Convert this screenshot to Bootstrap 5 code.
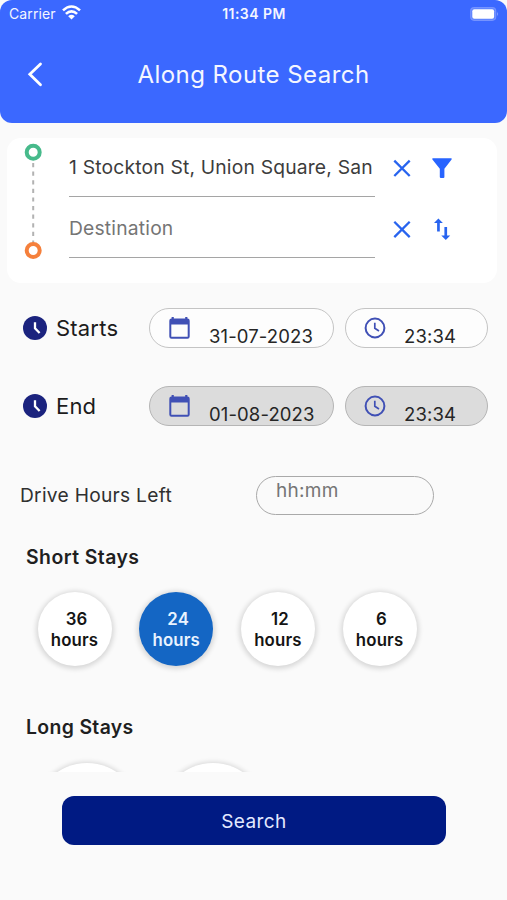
<!DOCTYPE html>
<html lang="en">
<head>
<meta charset="utf-8">
<meta name="viewport" content="width=device-width, initial-scale=1">
<title>Along Route Search</title>
<link href="https://cdn.jsdelivr.net/npm/bootstrap@5.3.0/dist/css/bootstrap.min.css" rel="stylesheet">
<style>
body{font-family:Inter,"Liberation Sans",sans-serif;background:#fafafa;color:#212121;height:900px;overflow:hidden;line-height:1.2}
svg{display:block;flex:none}
.app-head{height:123px;background:#3b68ff;border-radius:12px;color:#f4f6ff}
.status-row{height:28px;padding:0 8px 0 9px}
.status-row>div{flex:1 1 0}
.carrier{font-size:14px;letter-spacing:.1px}
.wifi{margin-left:-2px;margin-top:-2px}
.clock-text{font-size:14px;font-weight:600;letter-spacing:.45px;padding-top:1px}
.title-row{height:94px;padding:0 27px}
.title-row h1{font-size:24px;font-weight:400;letter-spacing:.45px}
.route-card{margin:15px 10px 0 7px;height:145px;background:#fff;border-radius:14px;padding:5px 43px 0 17px}
.route-fields{width:306px;margin-left:27px}
.route-field{height:54px;border-bottom:1.4px solid #a5a5a5;font-size:19.3px;letter-spacing:.18px;color:#3c3c3c;padding-bottom:3px;white-space:nowrap}
.route-field.second{height:61px;color:#757575;padding:3px 0 0}
.route-actions{margin-left:17px;width:60px}
.action-row{height:50px}
.action-row.second{height:72px}
.time-row{height:40px;padding-left:23px;margin-top:25px}
.time-row.ends{margin-top:38px}
.time-label{width:93px;margin-left:9px;padding-top:1px;font-size:22px;letter-spacing:.2px;color:#1c1c1c}
.pill{height:40px;border:1px solid #c4c4c4;border-radius:20px;background:#fdfdfd;font-size:18.5px;letter-spacing:.12px;color:#262626}
.pill span{margin:16px 0 0 17px;line-height:26px;white-space:nowrap}
.pill.filled{background:#dcdcdc;border-color:#b5b5b5}
.pill-date{width:185px;padding-left:18px}
.pill-time{width:143px;padding-left:17px;margin-left:11px}
.drive-row{height:40px;margin-top:49px;padding-left:20px;font-size:19.2px;letter-spacing:.27px;color:#303030}
.hours-box{width:178px;height:39px;border:1.4px solid #a9a9a9;border-radius:20px;padding:3px 0 0 19px;font-size:19px;letter-spacing:.3px;color:#757575}
.drive-label{width:236px;padding-top:2px}
.section-title{font-size:19.4px;font-weight:600;letter-spacing:.45px;padding:1px 0 0 26px;height:24px;line-height:24px;color:#1f1f1f;margin:29px 0 0}
.section-title.long{margin-top:48px;letter-spacing:.35px}
.stays{padding-left:37.5px;gap:27.7px;margin-top:24px}
.stay{width:74px;height:74px;border-radius:50%;background:#fff;box-shadow:0 1px 5px 2px rgba(0,0,0,.14);color:#141414;font-size:16.8px;font-weight:600;line-height:21px;letter-spacing:.15px;padding-top:2px}
.stay .num{padding-left:4px}
.stay.on{background:#1466c4;color:#e9f3ff}
.long-stays{height:20px;overflow:hidden;padding:11px 0 0 34px;gap:20px;margin-top:14px}
.stay-lg{width:106px;height:106px}
.search-btn,.search-btn:hover{display:block;width:384px;height:49px;margin:24px 0 0 62px;border:0;border-radius:12px;background:#001a83;color:#e3e9ff;font-size:19px;letter-spacing:.4px;padding:3px 0 0}
</style>
</head>
<body>
<header class="app-head">
  <div class="status-row d-flex align-items-center">
    <div class="d-flex align-items-center gap-2"><span class="carrier">Carrier</span>
      <svg class="wifi" width="19" height="15" viewBox="0 0 19 15"><g fill="none" stroke="#fff" stroke-width="2.600"><path d="M1 5.400Q9.500-2.400 18 5.400"/><path d="M3.900 8.900Q9.500 3.700 15.100 8.900"/></g><path d="M6.200 11.200Q9.500 8.300 12.800 11.200L9.500 14.500Z" fill="#fff"/></svg>
    </div>
    <div class="text-center clock-text">11:34 PM</div>
    <div class="d-flex justify-content-end">
      <svg width="29" height="14" viewBox="0 0 29 14"><rect x=".7" y=".7" width="25" height="12.600" rx="3.500" fill="#5c82ff" stroke="#7593ff" stroke-width="1.200"/><rect x="2.300" y="2.300" width="21.800" height="9.400" rx="2" fill="#fff"/><path d="M27.200 4.800Q29 7 27.200 9.200Z" fill="#91aaff"/></svg>
    </div>
  </div>
  <div class="title-row d-flex align-items-center justify-content-between">
    <svg width="16" height="26" viewBox="0 0 16 26"><path d="M13.500 2 2.800 12.300 13.500 22.700" fill="none" stroke="#fff" stroke-width="2.800" stroke-linecap="round"/></svg>
    <h1 class="m-0">Along Route Search</h1>
    <span class="px-2"></span>
  </div>
</header>

<main>
  <section class="route-card d-flex">
    <svg width="18" height="118" viewBox="0 0 18 118"><path d="M9.200 20V102" stroke="#b2b2b2" stroke-width="2" stroke-dasharray="4.200 4.400"/><circle cx="9.200" cy="9.300" r="6.500" fill="#fff" stroke="#47ba8b" stroke-width="4"/><circle cx="9.200" cy="107.500" r="6.500" fill="#fff" stroke="#f5803c" stroke-width="4"/></svg>
    <div class="route-fields">
      <div class="route-field d-flex align-items-center">1 Stockton St, Union Square, San</div>
      <div class="route-field second d-flex align-items-center">Destination</div>
    </div>
    <div class="route-actions">
      <div class="action-row d-flex align-items-center justify-content-between">
        <svg width="20" height="20" viewBox="0 0 20 20"><path d="M2.300 2.600 17.700 18M17.700 2.600 2.300 18" stroke="#2864ef" stroke-width="2.300"/></svg>
        <svg width="20" height="20" viewBox="0 0 20 20"><path d="M.8.300H19.200Q20.200.8 19.400 1.800L12.400 10.700V19Q12.400 20 11.400 20H8.900Q7.800 20 7.800 19V10.700L.6 1.800Q-.2.8.8.300Z" fill="#2864ff"/></svg>
      </div>
      <div class="action-row second d-flex align-items-center justify-content-between">
        <svg width="20" height="20" viewBox="0 0 20 20"><path d="M2.300 2.700 17.700 18.100M17.700 2.700 2.300 18.100" stroke="#2864ef" stroke-width="2.300"/></svg>
        <svg width="20" height="22" viewBox="0 0 20 22"><g transform="translate(.6 .4)"><path d="M5.800 0 10.300 4.600H7.200V13.200H4.500V4.600H1.400Z" fill="#2864ef"/><path d="M13.200 21.600 8.700 17H11.800V8.500H14.500V17H17.600Z" fill="#2864ef"/></g></svg>
      </div>
    </div>
  </section>

  <section class="time-row d-flex align-items-center">
    <svg width="24" height="24" viewBox="0 0 24 24"><circle cx="12" cy="12" r="12" fill="#1b237e"/><path d="M12 6.300V12.300L16.600 17" fill="none" stroke="#fff" stroke-width="2.300"/></svg>
    <span class="time-label">Starts</span>
    <div class="pill pill-date d-flex align-items-center">
      <svg width="24" height="24" viewBox="0 0 24 24"><path d="M4.700 1V5M18.300 1V5" stroke="#4050b5" stroke-width="2.200"/><path d="M3.500 2.500H19.500Q21.700 2.500 21.700 4.700V20.500Q21.700 22.700 19.500 22.700H3.500Q1.300 22.700 1.300 20.500V4.700Q1.300 2.500 3.500 2.500ZM3.300 8.500V20.700H19.700V8.500Z" fill="#4050b5" fill-rule="evenodd"/></svg>
      <span>31-07-2023</span>
    </div>
    <div class="pill pill-time d-flex align-items-center">
      <svg width="24" height="24" viewBox="0 0 24 24"><circle cx="12" cy="12" r="9.400" fill="none" stroke="#4050b5" stroke-width="2"/><path d="M11.800 6.800V12.300L16 15" fill="none" stroke="#4050b5" stroke-width="1.700"/></svg>
      <span>23:34</span>
    </div>
  </section>

  <section class="time-row ends d-flex align-items-center">
    <svg width="24" height="24" viewBox="0 0 24 24"><circle cx="12" cy="12" r="12" fill="#1b237e"/><path d="M12 6.300V12.300L16.600 17" fill="none" stroke="#fff" stroke-width="2.300"/></svg>
    <span class="time-label">End</span>
    <div class="pill pill-date filled d-flex align-items-center">
      <svg width="24" height="24" viewBox="0 0 24 24"><path d="M4.700 1V5M18.300 1V5" stroke="#4050b5" stroke-width="2.200"/><path d="M3.500 2.500H19.500Q21.700 2.500 21.700 4.700V20.500Q21.700 22.700 19.500 22.700H3.500Q1.300 22.700 1.300 20.500V4.700Q1.300 2.500 3.500 2.500ZM3.300 8.500V20.700H19.700V8.500Z" fill="#4050b5" fill-rule="evenodd"/></svg>
      <span>01-08-2023</span>
    </div>
    <div class="pill pill-time filled d-flex align-items-center">
      <svg width="24" height="24" viewBox="0 0 24 24"><circle cx="12" cy="12" r="9.400" fill="none" stroke="#4050b5" stroke-width="2"/><path d="M11.800 6.800V12.300L16 15" fill="none" stroke="#4050b5" stroke-width="1.700"/></svg>
      <span>23:34</span>
    </div>
  </section>

  <section class="drive-row d-flex align-items-center">
    <span class="drive-label">Drive Hours Left</span>
    <div class="hours-box">hh:mm</div>
  </section>

  <h2 class="section-title">Short Stays</h2>
  <div class="stays d-flex">
    <div class="stay d-flex flex-column align-items-center justify-content-center"><span class="num">36</span><span>hours</span></div>
    <div class="stay on d-flex flex-column align-items-center justify-content-center"><span class="num">24</span><span>hours</span></div>
    <div class="stay d-flex flex-column align-items-center justify-content-center"><span class="num">12</span><span>hours</span></div>
    <div class="stay d-flex flex-column align-items-center justify-content-center"><span class="num">6</span><span>hours</span></div>
  </div>

  <h2 class="section-title long">Long Stays</h2>
  <div class="long-stays d-flex">
    <div class="stay stay-lg flex-shrink-0"></div>
    <div class="stay stay-lg flex-shrink-0"></div>
  </div>
  <button type="button" class="btn search-btn">Search</button>
</main>
<script src="https://cdn.jsdelivr.net/npm/bootstrap@5.3.0/dist/js/bootstrap.bundle.min.js"></script>
</body>
</html>
